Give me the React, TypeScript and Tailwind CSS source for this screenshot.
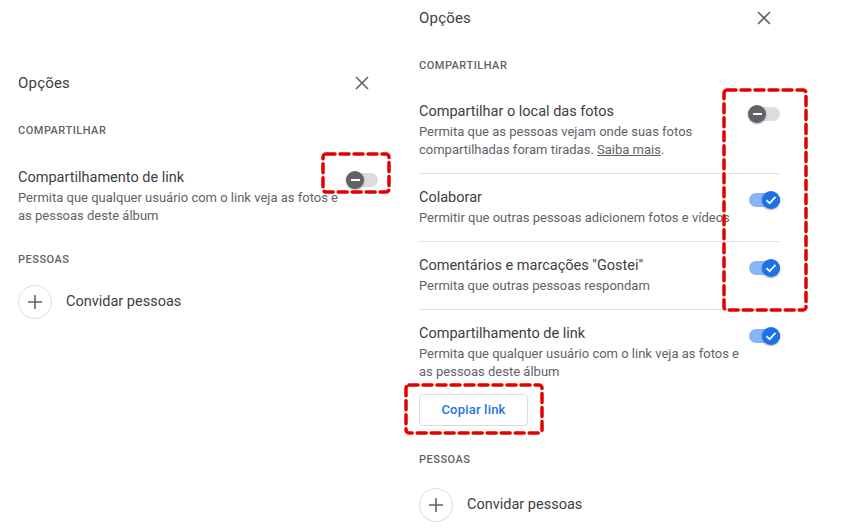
const font = { fontFamily: "Roboto, 'Noto Sans', sans-serif" };

function CloseIcon() {
  return (
    <svg width="14" height="14" viewBox="0 0 14 14">
      <path d="M1 1L13 13M13 1L1 13" stroke="#5f6368" strokeWidth="1.6" fill="none" />
    </svg>
  );
}

function Toggle({ on }: { on: boolean }) {
  return (
    <div className="relative w-[32px] h-[20px] shrink-0 mt-[2px]">
      <div
        className={`absolute left-[1px] right-0 top-[3px] h-[14px] rounded-full ${
          on ? "bg-[#8ab4f8]" : "bg-[#dadce0]"
        }`}
      />
      <div
        className={`absolute top-[1px] w-[18px] h-[18px] rounded-full flex items-center justify-center shadow-[0_1px_2px_rgba(0,0,0,0.35)] ${
          on ? "right-0 bg-[#1a73e8]" : "left-0 bg-[#5f6368]"
        }`}
      >
        {on ? (
          <svg width="14" height="14" viewBox="0 0 14 14">
            <path d="M2.5 7.2L5.6 10.2L11.5 3.8" stroke="white" strokeWidth="1.7" fill="none" />
          </svg>
        ) : (
          <div className="w-[9px] h-[2px] bg-white" />
        )}
      </div>
    </div>
  );
}

function Header() {
  return (
    <div className="h-[36px] flex items-center justify-between pr-[4px]">
      <p className="text-[15px] text-[#3c4043] tracking-[0.2px]">Opções</p>
      <div className="w-[24px] h-[24px] flex items-center justify-center">
        <CloseIcon />
      </div>
    </div>
  );
}

function Label({ children }: { children: string }) {
  return (
    <p className="text-[11px] leading-[16px] font-medium tracking-[0.5px] text-[#5f6368]">
      {children}
    </p>
  );
}

function Row({
  title,
  lines,
  on,
  divider,
  children,
}: {
  title: string;
  lines: React.ReactNode[];
  on: boolean;
  divider?: boolean;
  children?: React.ReactNode;
}) {
  return (
    <div className={`pt-[14px] pb-[14px] ${divider ? "border-b border-[#e0e0e0]" : ""}`}>
      <div className="flex justify-between">
        <div className="flex-1 min-w-0">
          <p className="text-[14.5px] leading-[20px] text-[#3c4043] whitespace-nowrap">{title}</p>
          <div className="mt-[1px] text-[13px] leading-[18px] text-[#5f6368]">
            {lines.map((l, i) => (
              <p key={i} className="whitespace-nowrap">
                {l}
              </p>
            ))}
          </div>
        </div>
        <Toggle on={on} />
      </div>
      {children}
    </div>
  );
}

function Invite() {
  return (
    <div className="flex items-center gap-[14px]">
      <div className="w-[34px] h-[34px] rounded-full border border-[#dadce0] flex items-center justify-center">
        <svg width="16" height="16" viewBox="0 0 16 16">
          <path d="M8 1V15M1 8H15" stroke="#5f6368" strokeWidth="1.6" fill="none" />
        </svg>
      </div>
      <p className="text-[14.5px] text-[#3c4043]">Convidar pessoas</p>
    </div>
  );
}

function Dashed({ x, y, w, h }: { x: number; y: number; w: number; h: number }) {
  return (
    <svg
      className="absolute pointer-events-none"
      style={{ left: x, top: y }}
      width={w}
      height={h}
    >
      <rect
        x="2"
        y="2"
        width={w - 4}
        height={h - 4}
        rx="3"
        fill="none"
        stroke="#e50000"
        strokeWidth="3.5"
        strokeDasharray="9 5"
        strokeLinecap="round"
      />
    </svg>
  );
}

export default function App() {
  return (
    <div className="relative w-[854px] h-[531px] bg-white overflow-hidden flex" style={font}>
      {/* Left panel */}
      <div className="w-[419px] pl-[18px] pt-[65px]">
        <div className="w-[360px]">
          <Header />
          <div className="mt-[22px]">
            <Label>COMPARTILHAR</Label>
          </div>
          <div className="mt-[15px]">
            <Row
              title="Compartilhamento de link"
              lines={["Permita que qualquer usuário com o link veja as fotos e", "as pessoas deste álbum"]}
              on={false}
            />
          </div>
          <div className="mt-[13px]">
            <Label>PESSOAS</Label>
          </div>
          <div className="mt-[17px]">
            <Invite />
          </div>
        </div>
      </div>

      {/* Right panel */}
      <div className="w-[361px]">
        <Header />
        <div className="mt-[22px]">
          <Label>COMPARTILHAR</Label>
        </div>
        <div className="mt-[14px]">
          <Row
            title="Compartilhar o local das fotos"
            lines={[
              "Permita que as pessoas vejam onde suas fotos",
              <>
                compartilhadas foram tiradas. <span className="underline">Saiba mais</span>.
              </>,
            ]}
            on={false}
            divider
          />
        </div>
        <Row
          title="Colaborar"
          lines={["Permitir que outras pessoas adicionem fotos e vídeos"]}
          on
          divider
        />
        <Row
          title={'Comentários e marcações "Gostei"'}
          lines={["Permita que outras pessoas respondam"]}
          on
          divider
        />
        <Row
          title="Compartilhamento de link"
          lines={["Permita que qualquer usuário com o link veja as fotos e", "as pessoas deste álbum"]}
          on
        >
          <button className="mt-[13px] w-[109px] h-[32px] rounded-[4px] border border-[#dadce0] text-[13px] font-medium text-[#1a73e8] tracking-[0.2px]">
            Copiar link
          </button>
        </Row>
        <div className="mt-[12px]">
          <Label>PESSOAS</Label>
        </div>
        <div className="mt-[20px]">
          <Invite />
        </div>
      </div>

      {/* Annotations */}
      <Dashed x={321} y={152} w={70} h={42} />
      <Dashed x={722} y={88} w={86} h={224} />
      <Dashed x={404} y={383} w={140} h={52} />
    </div>
  );
}
